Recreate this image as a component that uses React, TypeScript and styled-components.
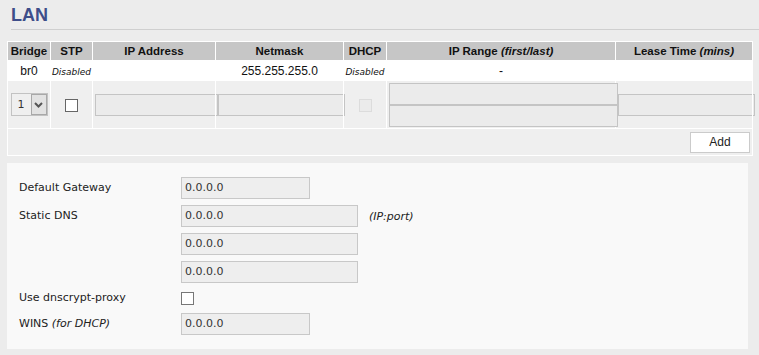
import { createGlobalStyle, styled } from 'styled-components';

const GlobalStyle = createGlobalStyle`
  html, body {
    margin: 0;
    padding: 0;
    background: #ececec;
  }
`;

const COLUMNS = [43, 42, 123, 128, 43, 229, 137];

const Chevron = () => (
  <svg width="9" height="6" viewBox="0 0 9 6">
    <path d="M1 1 L4.5 4.5 L8 1" fill="none" stroke="#555" strokeWidth="2" />
  </svg>
);

const App = () => {
  return (
    <S.Page>
      <GlobalStyle />
      <S.Title>LAN</S.Title>

      <S.Table>
        <colgroup>
          {COLUMNS.map((w, i) => (
            <col key={i} style={{ width: w }} />
          ))}
        </colgroup>
        <thead>
          <tr>
            <S.Th>Bridge</S.Th>
            <S.Th>STP</S.Th>
            <S.Th>IP Address</S.Th>
            <S.Th>Netmask</S.Th>
            <S.Th>DHCP</S.Th>
            <S.Th>
              IP Range <i>(first/last)</i>
            </S.Th>
            <S.Th>
              Lease Time <i>(mins)</i>
            </S.Th>
          </tr>
        </thead>
        <tbody>
          <S.DataRow>
            <S.Td>br0</S.Td>
            <S.Td>
              <S.Small>Disabled</S.Small>
            </S.Td>
            <S.Td />
            <S.Td>255.255.255.0</S.Td>
            <S.Td>
              <S.Small>Disabled</S.Small>
            </S.Td>
            <S.Td>-</S.Td>
            <S.Td />
          </S.DataRow>
          <S.EditRow>
            <S.Td>
              <S.Select>
                <S.SelectValue>1</S.SelectValue>
                <S.SelectArrow>
                  <Chevron />
                </S.SelectArrow>
              </S.Select>
            </S.Td>
            <S.Td>
              <S.Check />
            </S.Td>
            <S.InputCell>
              <S.CellInput $width={123} />
            </S.InputCell>
            <S.InputCell>
              <S.CellInput $width={127} />
            </S.InputCell>
            <S.Td>
              <S.Check $disabled />
            </S.Td>
            <S.InputCell>
              <S.RangeStack>
                <S.CellInput $width={229} />
                <S.CellInput $width={229} />
              </S.RangeStack>
            </S.InputCell>
            <S.InputCell>
              <S.CellInput $width={137} />
            </S.InputCell>
          </S.EditRow>
          <S.ButtonRow>
            <S.Td colSpan={7}>
              <S.AddButton>Add</S.AddButton>
            </S.Td>
          </S.ButtonRow>
        </tbody>
      </S.Table>

      <S.Panel>
        <S.Field>
          <S.Label>Default Gateway</S.Label>
          <S.Controls>
            <S.TextInput $width={129}>0.0.0.0</S.TextInput>
          </S.Controls>
        </S.Field>
        <S.Field>
          <S.Label>Static DNS</S.Label>
          <S.Controls>
            <S.InlineGroup>
              <S.TextInput $width={177}>0.0.0.0</S.TextInput>
              <S.Hint>(IP:port)</S.Hint>
            </S.InlineGroup>
            <S.TextInput $width={177}>0.0.0.0</S.TextInput>
            <S.TextInput $width={177}>0.0.0.0</S.TextInput>
          </S.Controls>
        </S.Field>
        <S.Field $short>
          <S.Label $short>Use dnscrypt-proxy</S.Label>
          <S.Controls>
            <S.PanelCheck />
          </S.Controls>
        </S.Field>
        <S.Field>
          <S.Label>
            WINS <i>(for DHCP)</i>
          </S.Label>
          <S.Controls>
            <S.TextInput $width={129}>0.0.0.0</S.TextInput>
          </S.Controls>
        </S.Field>
      </S.Panel>
    </S.Page>
  );
};

const S = {
  Page: styled.div`
    display: flex;
    flex-direction: column;
    align-items: flex-start;

    padding-left: 7px;
    font-family: 'DejaVu Sans', Verdana, sans-serif;
  `,

  Title: styled.h1`
    align-self: stretch;

    margin: 0 0 11px 4px;
    padding: 4px 0 3px;
    border-bottom: 1px solid #cfcfcf;

    color: #3e4e8a;
    font-family: 'Liberation Sans', Arial, sans-serif;
    font-size: 18px;
    font-weight: bold;
    line-height: 22px;
  `,

  Table: styled.table`
    table-layout: fixed;
    width: 746px;
    border-collapse: collapse;

    font-family: 'Liberation Sans', Arial, sans-serif;
    font-size: 12px;
    color: #111;
  `,

  Th: styled.th`
    height: 18px;
    padding: 0;
    border: 1px solid #fff;

    background: #c6c6c6;
    font-size: 11.5px;
    font-weight: bold;
    text-align: center;
    white-space: nowrap;
  `,

  Td: styled.td`
    padding: 0;
    border: 1px solid #fff;

    text-align: center;
    vertical-align: middle;
    white-space: nowrap;
    overflow: visible;
  `,

  InputCell: styled.td`
    padding: 0 0 0 2px;
    border: 1px solid #fff;

    vertical-align: middle;
    overflow: visible;
  `,

  DataRow: styled.tr`
    height: 20px;

    background: #fff;
  `,

  EditRow: styled.tr`
    height: 48px;

    background: #efefef;
  `,

  ButtonRow: styled.tr`
    height: 27px;

    background: #efefef;

    & > td {
      padding-right: 2px;
      text-align: right;
    }
  `,

  Small: styled.span`
    font-family: 'DejaVu Sans', Verdana, sans-serif;
    font-size: 9px;
    font-style: italic;
  `,

  Select: styled.div`
    display: inline-flex;
    box-sizing: border-box;

    width: 37px;
    height: 23px;
    border: 1px solid #c2c2c2;

    background: #efefef;
    vertical-align: middle;
  `,

  SelectValue: styled.span`
    display: flex;
    align-items: center;
    justify-content: center;

    width: 19px;

    color: #333;
    font-family: 'DejaVu Sans', Verdana, sans-serif;
    font-size: 11px;
  `,

  SelectArrow: styled.span`
    display: flex;
    flex: 1;
    align-items: center;
    justify-content: center;

    border: 1px solid #a8a8a8;

    background: #e2e2e2;
  `,

  Check: styled.span<{ $disabled?: boolean }>`
    display: inline-block;
    box-sizing: border-box;

    width: 13px;
    height: 13px;
    border: 1px solid ${({ $disabled }) => ($disabled ? '#dcdcdc' : '#666')};

    background: ${({ $disabled }) => ($disabled ? '#ebebeb' : '#fff')};
    vertical-align: middle;
  `,

  CellInput: styled.div<{ $width: number }>`
    box-sizing: border-box;

    width: ${({ $width }) => $width}px;
    height: 22px;
    border: 1px solid #c4c4c4;

    background: #ebebeb;
  `,

  RangeStack: styled.div`
    display: flex;
    flex-direction: column;
  `,

  AddButton: styled.button`
    box-sizing: border-box;

    width: 60px;
    height: 21px;
    padding: 0;
    border: 1px solid #cbcbcb;

    background: #fff;
    color: #222;
    font-family: 'Liberation Sans', Arial, sans-serif;
    font-size: 12px;
    vertical-align: middle;
  `,

  Panel: styled.section`
    display: flex;
    flex-direction: column;
    gap: 6px;
    box-sizing: border-box;

    width: 741px;
    margin-top: 7px;
    padding: 14px 12px;

    background: #f9f9f9;
    color: #222;
    font-size: 11px;
  `,

  Field: styled.div<{ $short?: boolean }>`
    display: grid;
    grid-template-columns: 162px auto;
    align-items: ${({ $short }) => ($short ? 'center' : 'start')};

    min-height: ${({ $short }) => ($short ? '18px' : '22px')};
  `,

  Label: styled.div<{ $short?: boolean }>`
    line-height: ${({ $short }) => ($short ? '18px' : '22px')};

    & > i {
      font-style: italic;
    }
  `,

  Controls: styled.div`
    display: flex;
    flex-direction: column;
    align-items: flex-start;
    gap: 6px;
  `,

  InlineGroup: styled.div`
    display: flex;
    align-items: center;
    gap: 11px;
  `,

  TextInput: styled.div<{ $width: number }>`
    box-sizing: border-box;

    width: ${({ $width }) => $width}px;
    height: 22px;
    padding-left: 3px;
    border: 1px solid #c8c8c8;

    background: #eeeeee;
    color: #333;
    line-height: 20px;
  `,

  Hint: styled.i`
    color: #222;
    font-style: italic;
  `,

  PanelCheck: styled.span`
    display: block;
    box-sizing: border-box;

    width: 13px;
    height: 13px;
    border: 1px solid #777;

    background: #fff;
  `,
};

export default App;
